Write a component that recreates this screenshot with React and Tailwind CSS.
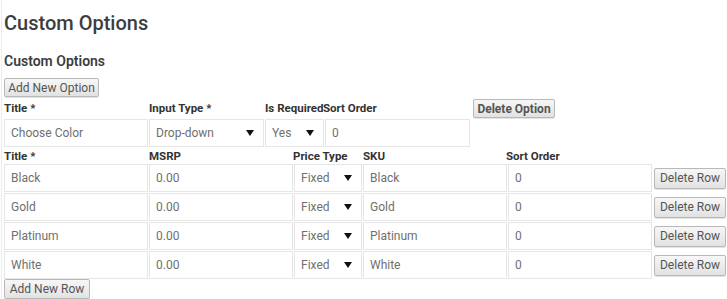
import React from 'react';

const rows = ['Black', 'Gold', 'Platinum', 'White'];

const Arrow = () => (
  <svg width="8" height="6" viewBox="0 0 8 6" className="shrink-0">
    <path d="M0 0 L8 0 L4 6 Z" fill="#111" />
  </svg>
);

const Field = ({ value, className }) => (
  <div
    className={`flex h-[28px] items-center border border-[#e6e6e6] bg-white px-[6px] text-[12px] text-[#6f6f6f] ${className}`}
  >
    {value}
  </div>
);

const Select = ({ value, className }) => (
  <div
    className={`flex h-[28px] items-center justify-between border border-[#e6e6e6] bg-white pl-[6px] pr-[9px] text-[12px] text-[#6f6f6f] ${className}`}
  >
    <span>{value}</span>
    <Arrow />
  </div>
);

const Button = ({ children, className = '' }) => (
  <button
    className={`flex h-[19px] shrink-0 items-center justify-center whitespace-nowrap rounded-[2px] border border-[#b8b8b8] bg-gradient-to-b from-[#f7f7f7] to-[#e2e2e2] px-0 text-[12px] leading-none text-[#555] shadow-[0_1px_0_#e4e4e4] ${className}`}
  >
    {children}
  </button>
);

const Label = ({ children, className = '' }) => (
  <div className={`whitespace-nowrap text-[11.5px] font-bold leading-none text-[#333] ${className}`}>
    {children}
  </div>
);

export default function App() {
  return (
    <div
      className="h-[299px] w-[727px] overflow-hidden bg-white"
      style={{ fontFamily: 'Roboto, "Liberation Sans", sans-serif' }}
    >
      <div className="ml-[1px] h-full border-l border-[#ececec] pl-[2px] pt-[11px]">
        <h1 className="text-[20px] font-medium leading-[24px] text-[#3d3d3d]">
          Custom Options
        </h1>
        <h2 className="mt-[18px] text-[14px] font-semibold leading-[16px] text-[#3d3d3d]">
          Custom Options
        </h2>
        <Button className="mt-[9px] w-[95px]">Add New Option</Button>

        <div className="mt-[2px] flex h-[19px] items-center">
          <Label className="w-[145px]">Title *</Label>
          <Label className="w-[116px]">Input Type *</Label>
          <Label className="w-[58px]">Is Required</Label>
          <Label className="w-[150px]">Sort Order</Label>
          <Button className="w-[82px] font-bold">Delete Option</Button>
        </div>
        <div className="mt-[1px] flex gap-[1px]">
          <Field value="Choose Color" className="w-[144px]" />
          <Select value="Drop-down" className="w-[115px]" />
          <Select value="Yes" className="w-[59px]" />
          <Field value="0" className="w-[145px]" />
        </div>

        <div className="mt-[3px] flex h-[13px] items-center">
          <Label className="w-[145px]">Title *</Label>
          <Label className="w-[144px]">MSRP</Label>
          <Label className="w-[70px]">Price Type</Label>
          <Label className="w-[143px]">SKU</Label>
          <Label>Sort Order</Label>
        </div>
        <div className="mt-[1px] flex flex-col gap-[1px]">
          {rows.map((r) => (
            <div key={r} className="flex items-center gap-[1px]">
              <Field value={r} className="w-[144px]" />
              <Field value="0.00" className="w-[144px]" />
              <Select value="Fixed" className="w-[68px]" />
              <Field value={r} className="w-[144px]" />
              <Field value="0" className="w-[144px]" />
              <Button className="ml-[1px] h-[21px] w-[72px]">Delete Row</Button>
            </div>
          ))}
        </div>
        <Button className="h-[20px] w-[86px]">Add New Row</Button>
      </div>
    </div>
  );
}
